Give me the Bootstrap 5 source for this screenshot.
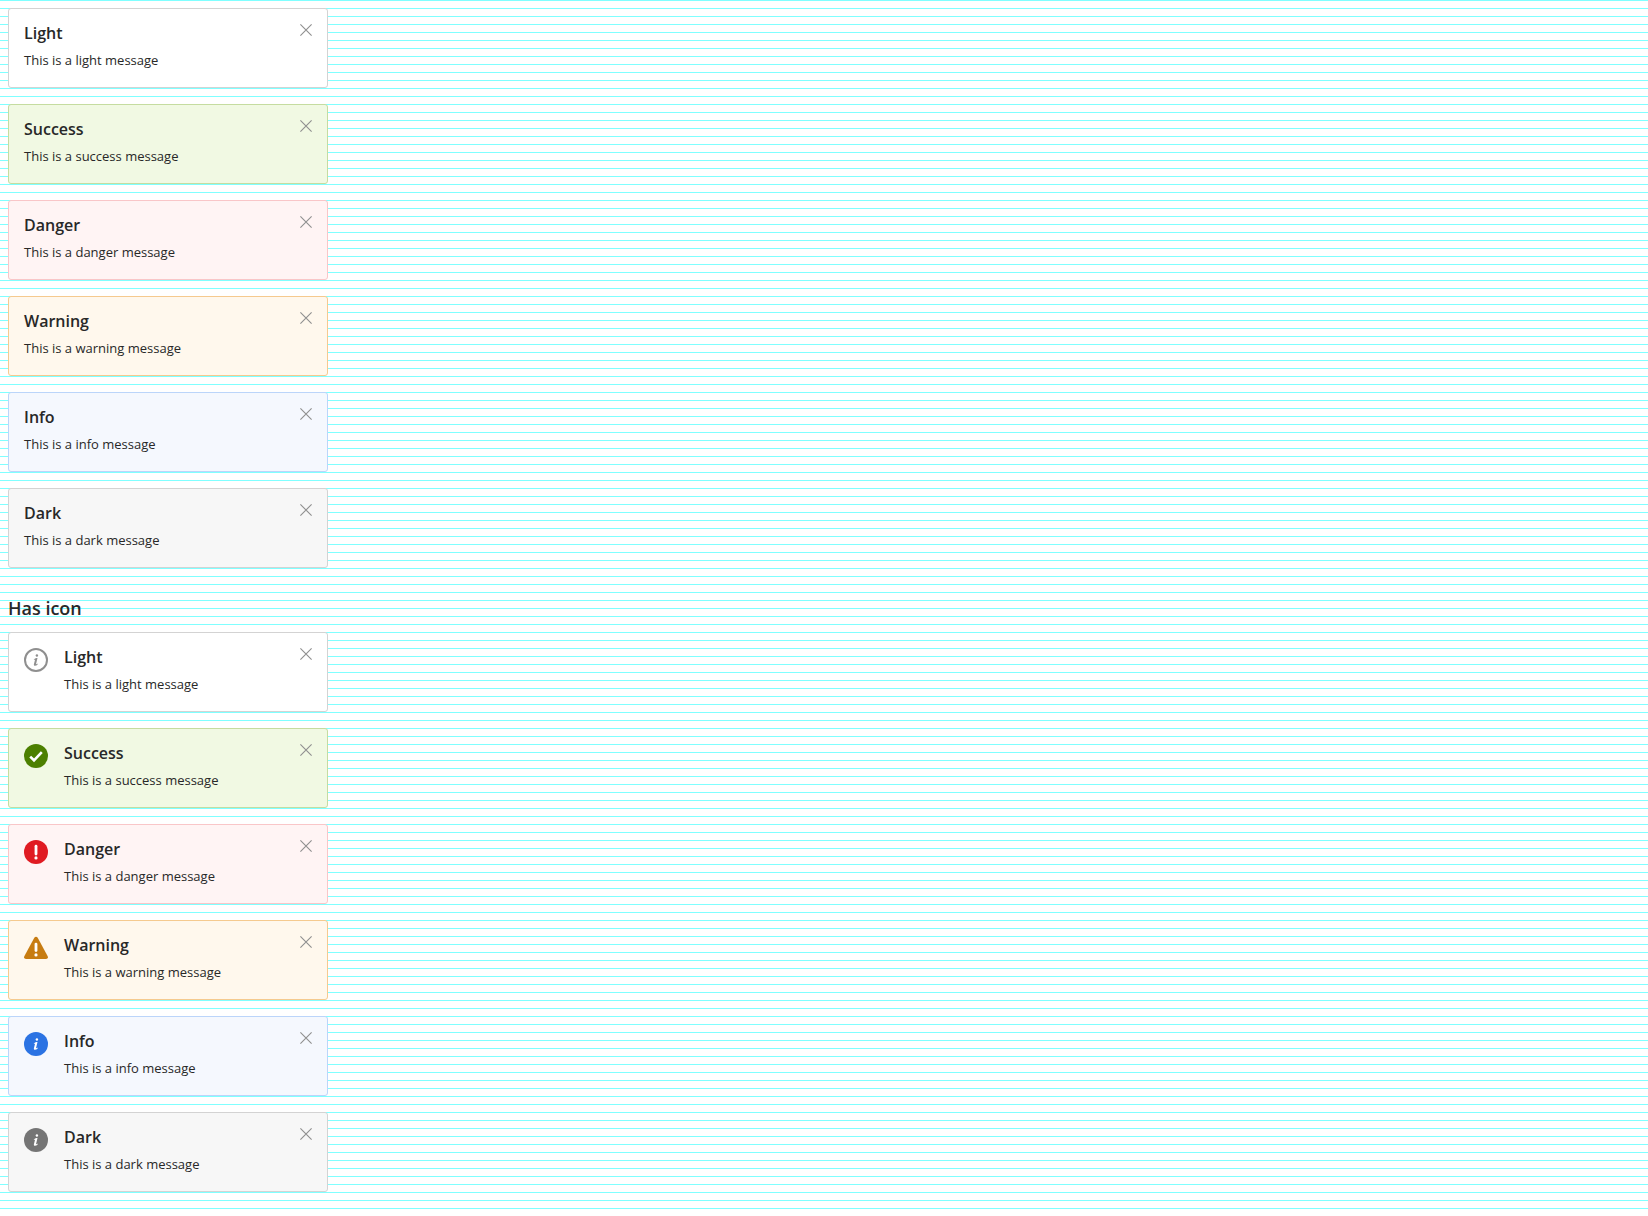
<!DOCTYPE html>
<html lang="en">
<head>
<meta charset="utf-8">
<meta name="viewport" content="width=device-width, initial-scale=1">
<title>Messages</title>
<link href="https://cdn.jsdelivr.net/npm/bootstrap@5.3.0/dist/css/bootstrap.min.css" rel="stylesheet">
<style>
body {
  font-family: "Open Sans", sans-serif;
  color: #282828;
  min-height: 100vh;
  background: #fff linear-gradient(to bottom, #80ffff 1px, transparent 1px) 0 0 / 100% 8px;
}
.message {
  --bs-alert-padding-x: 15px;
  --bs-alert-padding-y: 15px;
  --bs-alert-margin-bottom: 0;
  --bs-alert-border-radius: 3px;
  --bs-alert-color: #282828;
  max-width: 320px;
  min-height: 80px;
}
.message-light { --bs-alert-bg: #fff; --bs-alert-border-color: #d3d3d3; --icon: #8f8f8f; }
.message-success { --bs-alert-bg: #f1f9e3; --bs-alert-border-color: #c5dca0; --icon: #4c8000; }
.message-danger { --bs-alert-bg: #fff4f4; --bs-alert-border-color: #f9c6c8; --icon: #e01b22; }
.message-warning { --bs-alert-bg: #fff8ed; --bs-alert-border-color: #f5ca8f; --icon: #c77c11; }
.message-info { --bs-alert-bg: #f5f8fe; --bs-alert-border-color: #bbd5fa; --icon: #2b73e3; }
.message-dark { --bs-alert-bg: #f7f7f7; --bs-alert-border-color: #d3d3d3; --icon: #757575; }
.message-icon { color: var(--icon); }
.message-title { font-size: 16px; line-height: 18px; font-weight: 600; margin: 0 0 8px; }
.message-text { font-size: 13px; line-height: 20px; margin: 0; }
.message-close { color: #8f8f8f; line-height: 0; }
.section-title { font-size: 18px; line-height: 24px; font-weight: 600; }
</style>
</head>
<body>
<svg class="d-none" aria-hidden="true">
  <symbol id="close" viewBox="0 0 12 12"><path d="M.4.4l11.2 11.2M11.6.4L.4 11.6" fill="none" stroke="currentColor" stroke-width="1.1"/></symbol>
  <symbol id="mark-i" viewBox="0 0 24 24"><circle cx="12.900" cy="7.500" r="1.200"/><path d="M10 11.200c1-.9 2.200-1.300 3.500-1.300L12 16.300c.7 0 1.200-.3 1.700-.7l-.2 1.100c-.8.7-1.600 1.100-2.600 1.100-.9 0-1.200-.6-1-1.500l1.200-4.900c-.4 0-.8.200-1.300.5z"/></symbol>
  <symbol id="outline" viewBox="0 0 24 24"><circle cx="12" cy="12" r="11" fill="none" stroke="currentColor" stroke-width="2"/><use href="#mark-i" fill="currentColor"/></symbol>
  <symbol id="info" viewBox="0 0 24 24"><circle cx="12" cy="12" r="12" fill="currentColor"/><use href="#mark-i" fill="#fff"/></symbol>
  <symbol id="check" viewBox="0 0 24 24"><circle cx="12" cy="12" r="12" fill="currentColor"/><path d="M6.200 12.600l3.800 3.700 7.800-8.200" fill="none" stroke="#fff" stroke-width="2.600"/></symbol>
  <symbol id="error" viewBox="0 0 24 24"><circle cx="12" cy="12" r="12" fill="currentColor"/><path d="M12 6.200v7.800" stroke="#fff" stroke-width="2.800" stroke-linecap="round"/><circle cx="12" cy="17.900" r="1.600" fill="#fff"/></symbol>
  <symbol id="caution" viewBox="0 0 24 24"><path d="M10.300 1.700Q12-.2 13.700 1.700L23.700 20.200Q24.500 22.600 22 23H2Q-.5 22.600.3 20.200Z" fill="currentColor"/><path d="M12 8.100v6.400" stroke="#fff" stroke-width="2.800" stroke-linecap="round"/><circle cx="12" cy="18.900" r="1.600" fill="#fff"/></symbol>
</svg>
<main class="container-fluid p-2">
  <section class="d-flex flex-column gap-3">
    <div class="alert message message-light" role="alert">
      <div class="d-flex">
        <div class="flex-grow-1"><h3 class="message-title">Light</h3><p class="message-text">This is a light message</p></div>
        <button type="button" class="message-close btn p-0 border-0 align-self-start" data-bs-dismiss="alert" aria-label="Close"><svg width="12" height="12"><use href="#close"/></svg></button>
      </div>
    </div>
    <div class="alert message message-success" role="alert">
      <div class="d-flex">
        <div class="flex-grow-1"><h3 class="message-title">Success</h3><p class="message-text">This is a success message</p></div>
        <button type="button" class="message-close btn p-0 border-0 align-self-start" data-bs-dismiss="alert" aria-label="Close"><svg width="12" height="12"><use href="#close"/></svg></button>
      </div>
    </div>
    <div class="alert message message-danger" role="alert">
      <div class="d-flex">
        <div class="flex-grow-1"><h3 class="message-title">Danger</h3><p class="message-text">This is a danger message</p></div>
        <button type="button" class="message-close btn p-0 border-0 align-self-start" data-bs-dismiss="alert" aria-label="Close"><svg width="12" height="12"><use href="#close"/></svg></button>
      </div>
    </div>
    <div class="alert message message-warning" role="alert">
      <div class="d-flex">
        <div class="flex-grow-1"><h3 class="message-title">Warning</h3><p class="message-text">This is a warning message</p></div>
        <button type="button" class="message-close btn p-0 border-0 align-self-start" data-bs-dismiss="alert" aria-label="Close"><svg width="12" height="12"><use href="#close"/></svg></button>
      </div>
    </div>
    <div class="alert message message-info" role="alert">
      <div class="d-flex">
        <div class="flex-grow-1"><h3 class="message-title">Info</h3><p class="message-text">This is a info message</p></div>
        <button type="button" class="message-close btn p-0 border-0 align-self-start" data-bs-dismiss="alert" aria-label="Close"><svg width="12" height="12"><use href="#close"/></svg></button>
      </div>
    </div>
    <div class="alert message message-dark" role="alert">
      <div class="d-flex">
        <div class="flex-grow-1"><h3 class="message-title">Dark</h3><p class="message-text">This is a dark message</p></div>
        <button type="button" class="message-close btn p-0 border-0 align-self-start" data-bs-dismiss="alert" aria-label="Close"><svg width="12" height="12"><use href="#close"/></svg></button>
      </div>
    </div>
  </section>
  <h2 class="section-title mt-4 pt-1 mb-2 pb-1">Has icon</h2>
  <section class="d-flex flex-column gap-3">
    <div class="alert message message-light" role="alert">
      <div class="d-flex">
        <svg class="message-icon flex-shrink-0 me-3" width="24" height="24" aria-hidden="true"><use href="#outline"/></svg>
        <div class="flex-grow-1"><h3 class="message-title">Light</h3><p class="message-text">This is a light message</p></div>
        <button type="button" class="message-close btn p-0 border-0 align-self-start" data-bs-dismiss="alert" aria-label="Close"><svg width="12" height="12"><use href="#close"/></svg></button>
      </div>
    </div>
    <div class="alert message message-success" role="alert">
      <div class="d-flex">
        <svg class="message-icon flex-shrink-0 me-3" width="24" height="24" aria-hidden="true"><use href="#check"/></svg>
        <div class="flex-grow-1"><h3 class="message-title">Success</h3><p class="message-text">This is a success message</p></div>
        <button type="button" class="message-close btn p-0 border-0 align-self-start" data-bs-dismiss="alert" aria-label="Close"><svg width="12" height="12"><use href="#close"/></svg></button>
      </div>
    </div>
    <div class="alert message message-danger" role="alert">
      <div class="d-flex">
        <svg class="message-icon flex-shrink-0 me-3" width="24" height="24" aria-hidden="true"><use href="#error"/></svg>
        <div class="flex-grow-1"><h3 class="message-title">Danger</h3><p class="message-text">This is a danger message</p></div>
        <button type="button" class="message-close btn p-0 border-0 align-self-start" data-bs-dismiss="alert" aria-label="Close"><svg width="12" height="12"><use href="#close"/></svg></button>
      </div>
    </div>
    <div class="alert message message-warning" role="alert">
      <div class="d-flex">
        <svg class="message-icon flex-shrink-0 me-3" width="24" height="24" aria-hidden="true"><use href="#caution"/></svg>
        <div class="flex-grow-1"><h3 class="message-title">Warning</h3><p class="message-text">This is a warning message</p></div>
        <button type="button" class="message-close btn p-0 border-0 align-self-start" data-bs-dismiss="alert" aria-label="Close"><svg width="12" height="12"><use href="#close"/></svg></button>
      </div>
    </div>
    <div class="alert message message-info" role="alert">
      <div class="d-flex">
        <svg class="message-icon flex-shrink-0 me-3" width="24" height="24" aria-hidden="true"><use href="#info"/></svg>
        <div class="flex-grow-1"><h3 class="message-title">Info</h3><p class="message-text">This is a info message</p></div>
        <button type="button" class="message-close btn p-0 border-0 align-self-start" data-bs-dismiss="alert" aria-label="Close"><svg width="12" height="12"><use href="#close"/></svg></button>
      </div>
    </div>
    <div class="alert message message-dark" role="alert">
      <div class="d-flex">
        <svg class="message-icon flex-shrink-0 me-3" width="24" height="24" aria-hidden="true"><use href="#info"/></svg>
        <div class="flex-grow-1"><h3 class="message-title">Dark</h3><p class="message-text">This is a dark message</p></div>
        <button type="button" class="message-close btn p-0 border-0 align-self-start" data-bs-dismiss="alert" aria-label="Close"><svg width="12" height="12"><use href="#close"/></svg></button>
      </div>
    </div>
  </section>
</main>
<script src="https://cdn.jsdelivr.net/npm/bootstrap@5.3.0/dist/js/bootstrap.bundle.min.js"></script>
</body>
</html>
